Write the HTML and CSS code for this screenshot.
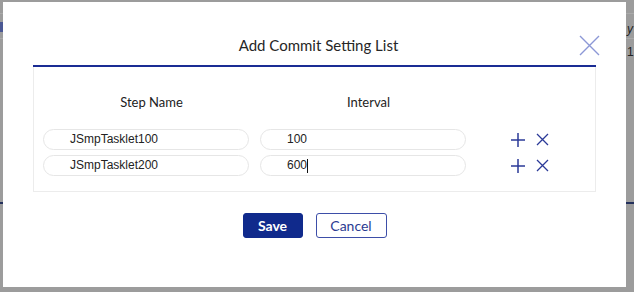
FILE: index.html
```html
<!DOCTYPE html>
<html>
<head>
<meta charset="utf-8">
<link rel="stylesheet" href="styles.css">
</head>
<body>
<div class="page">
  <span class="bg-mark bg-left"></span>
  <span class="bg-line bg-line-left"></span>
  <span class="bg-line bg-line-right"></span>
  <span class="bg-text bg-y">y</span>
  <span class="bg-text bg-10">1</span>
  <span class="bg-band b1"></span>
  <span class="bg-band b2"></span>
</div>
<div class="modal">
  <div class="modal-header">
    <h2 class="title">Add Commit Setting List</h2>
    <button class="close" aria-label="Close">
      <svg width="21" height="21" viewBox="0 0 21 21"><path d="M1 1 L20 20 M20 1 L1 20" stroke="#8c98d6" stroke-width="1.4" fill="none"/></svg>
    </button>
  </div>
  <div class="box">
    <div class="head-row">
      <div class="head-cell">Step Name</div>
      <div class="head-cell">Interval</div>
    </div>
    <div class="rows">
      <div class="row">
        <div class="field">JSmpTasklet100</div>
        <div class="field">100</div>
        <div class="actions">
          <svg class="plus" width="16" height="16" viewBox="0 0 16 16"><path d="M8 1 V15 M1 8 H15" stroke="#2b3a98" stroke-width="1.5" fill="none"/></svg>
          <svg class="times" width="13" height="13" viewBox="0 0 13 13"><path d="M1 1 L12 12 M12 1 L1 12" stroke="#2b3a98" stroke-width="1.3" fill="none"/></svg>
        </div>
      </div>
      <div class="row">
        <div class="field">JSmpTasklet200</div>
        <div class="field">600<span class="caret"></span></div>
        <div class="actions">
          <svg class="plus" width="16" height="16" viewBox="0 0 16 16"><path d="M8 1 V15 M1 8 H15" stroke="#2b3a98" stroke-width="1.5" fill="none"/></svg>
          <svg class="times" width="13" height="13" viewBox="0 0 13 13"><path d="M1 1 L12 12 M12 1 L1 12" stroke="#2b3a98" stroke-width="1.3" fill="none"/></svg>
        </div>
      </div>
    </div>
  </div>
  <div class="buttons">
    <button class="btn btn-save">Save</button>
    <button class="btn btn-cancel">Cancel</button>
  </div>
</div>
</body>
</html>
```
FILE: styles.css
```css
html, body {
  margin: 0;
  padding: 0;
}
body {
  width: 634px;
  height: 292px;
  background: #9c9c9c;
  position: relative;
  overflow: hidden;
  font-family: Lato, "Liberation Sans", sans-serif;
}
.page {
  position: absolute;
  inset: 0;
}
.bg-mark {
  position: absolute;
  left: 0;
  top: 22px;
  width: 3px;
  height: 10px;
  background: #4b5894;
}
.bg-line {
  position: absolute;
  top: 202px;
  height: 2px;
  background: #23305c;
}
.bg-line-left { left: 0; width: 3px; }
.bg-line-right { left: 626px; width: 8px; }
.bg-band {
  position: absolute;
  height: 1px;
  background: #aaaaaa;
}
.b1 { left: 0; width: 634px; top: 13px; }
.b2 { left: 0; width: 634px; top: 38px; }
.bg-text {
  position: absolute;
  font-family: "Liberation Sans", sans-serif;
  font-size: 12px;
  color: #222;
  line-height: 12px;
}
.bg-y { left: 627px; top: 23px; font-style: italic; }
.bg-10 { left: 627px; top: 46px; }

.modal {
  position: absolute;
  left: 3px;
  top: 2px;
  width: 623px;
  height: 285px;
  background: #fff;
  box-sizing: border-box;
  padding: 0 30px;
}
.modal-header {
  position: relative;
  padding-top: 33px;
  padding-bottom: 10px;
  border-bottom: 2px solid #1a2c94;
}
.title {
  margin: 0;
  font-size: 15px;
  line-height: 20px;
  font-weight: 400;
  color: #262626;
  text-align: center;
  padding-left: 8px;
}
.close {
  position: absolute;
  right: -4px;
  top: 33px;
  width: 21px;
  height: 21px;
  padding: 0;
  border: 0;
  background: transparent;
  display: block;
}
.close svg { display: block; }

.box {
  border: 1px solid #ececec;
  border-top: 0;
  padding: 27px 0 15px 9px;
}
.head-row {
  display: flex;
  gap: 11px;
  height: 16px;
  margin-bottom: 19px;
}
.head-cell {
  width: 206px;
  box-sizing: border-box;
  padding-left: 11px;
  text-align: center;
  font-size: 13px;
  line-height: 16px;
  color: #222;
}
.rows {
  display: flex;
  flex-direction: column;
  gap: 5px;
}
.row {
  display: flex;
  align-items: center;
  gap: 11px;
}
.field {
  width: 206px;
  height: 21px;
  box-sizing: border-box;
  border: 1px solid #e6e6e6;
  border-radius: 11px;
  padding-left: 26px;
  font-family: "Liberation Sans", Arial, sans-serif;
  font-size: 12px;
  line-height: 19px;
  color: #222;
  display: flex;
  align-items: center;
}
.caret {
  display: inline-block;
  width: 1px;
  height: 14px;
  background: #111;
}
.actions {
  display: flex;
  align-items: center;
  gap: 10px;
  padding-left: 33px;
}
.actions svg { display: block; }

.buttons {
  display: flex;
  justify-content: center;
  gap: 13px;
  margin-top: 21px;
}
.btn {
  height: 25px;
  box-sizing: border-box;
  border-radius: 3px;
  font-family: Lato, "Liberation Sans", sans-serif;
  font-size: 14px;
  padding: 0;
  cursor: pointer;
}
.btn-save {
  width: 60px;
  background: #102a8c;
  border: 1px solid #102a8c;
  color: #fff;
  font-weight: 700;
}
.btn-cancel {
  width: 71px;
  background: #fff;
  border: 1px solid #3d4ea8;
  color: #2b3b92;
}
```
